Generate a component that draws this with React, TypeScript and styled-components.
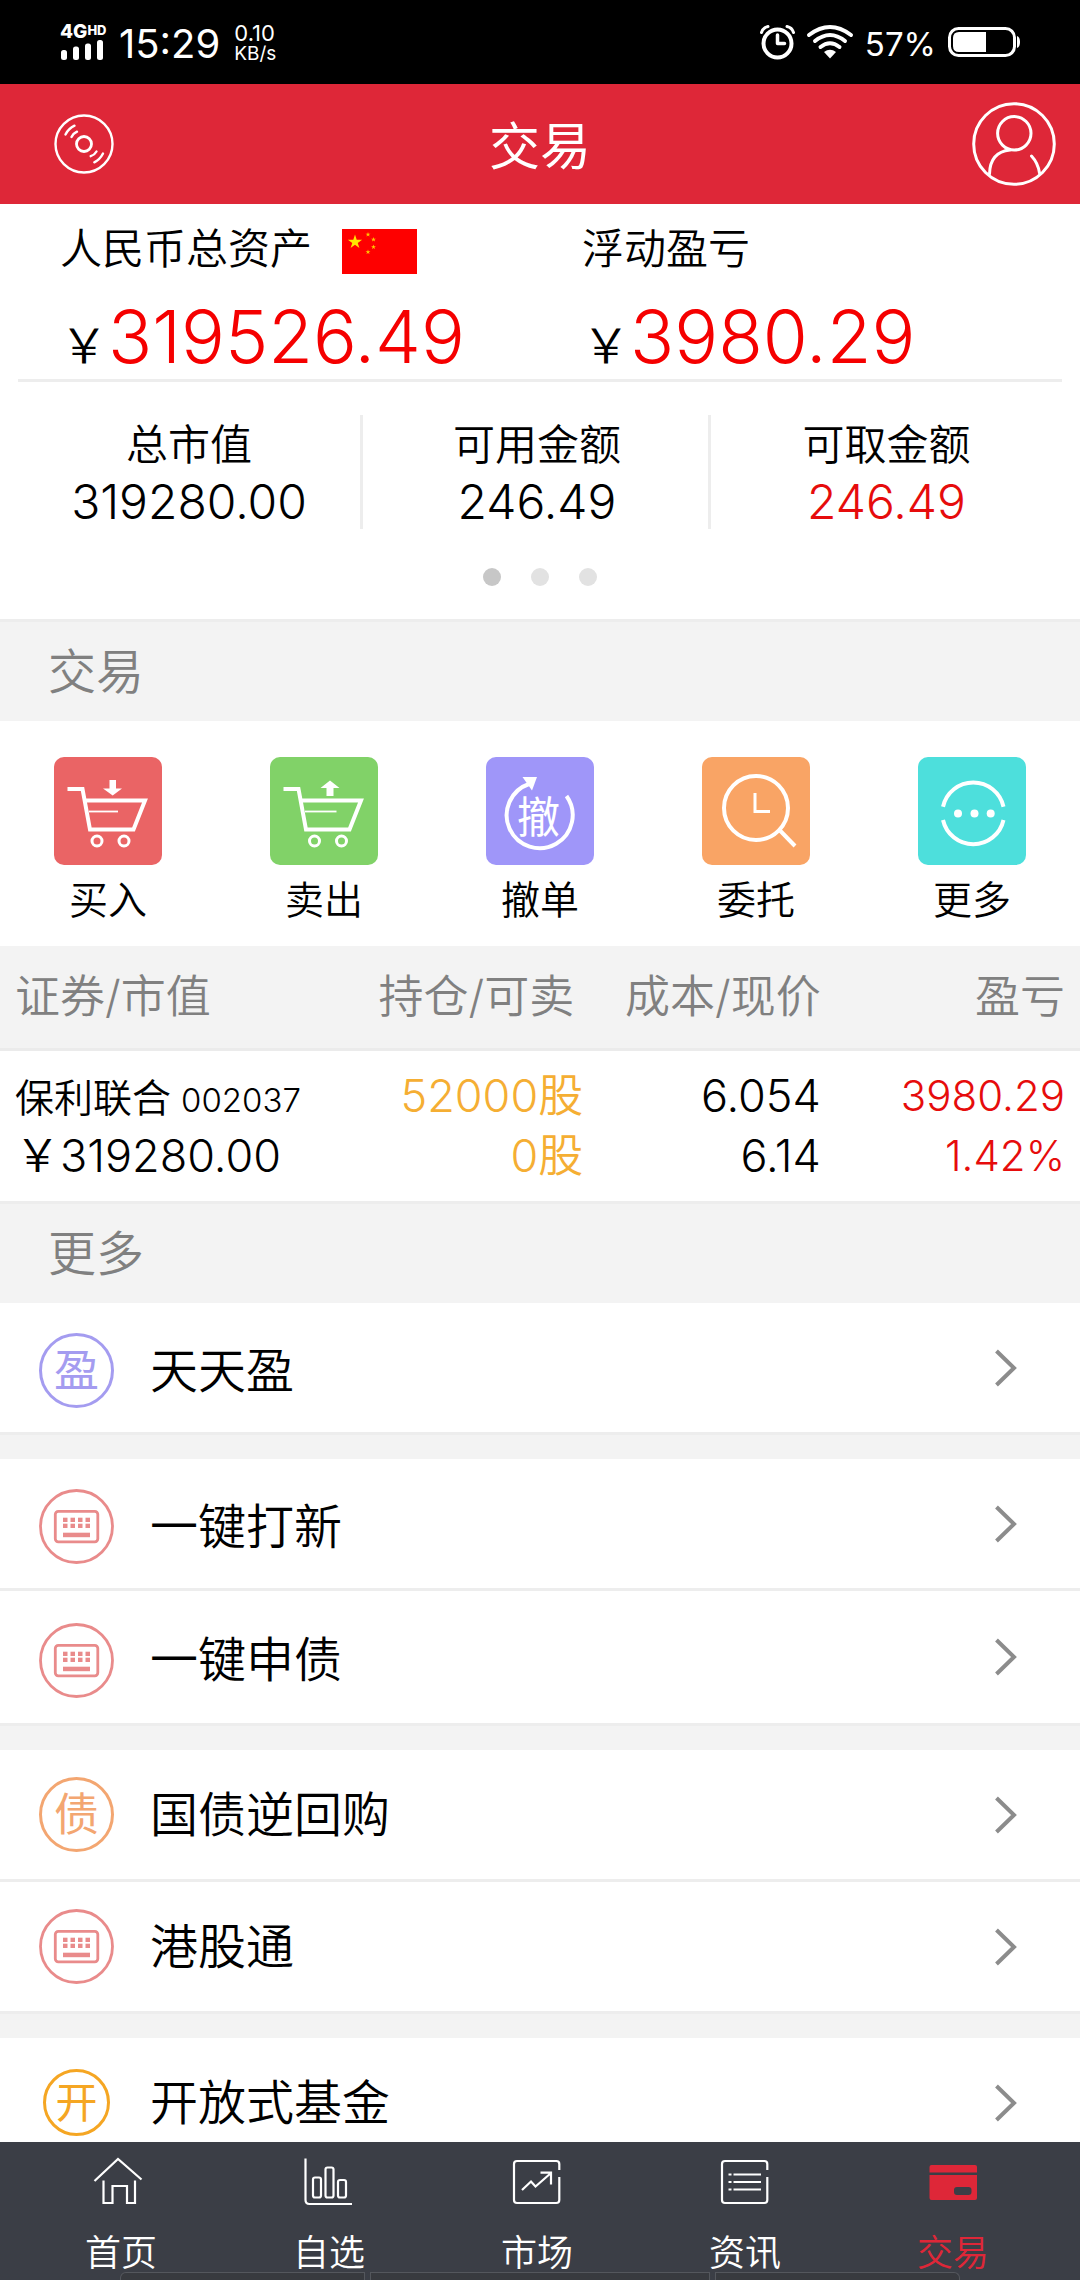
import React from "react";
import styled, { createGlobalStyle } from "styled-components";

const GlobalStyle = createGlobalStyle`
  *, *::before, *::after { box-sizing: border-box; }
  body {
    margin: 0;
    background: #f3f3f3;
    color: #000;
    font-family: Inter, "Noto Sans CJK SC", sans-serif;
    font-weight: 350;
  }
  button {
    margin: 0;
    padding: 0;
    border: 0;
    background: none;
    color: inherit;
    font: inherit;
    cursor: pointer;
  }
  a { color: inherit; text-decoration: none; }
  h1, h2, p, dl, dd, ul { margin: 0; padding: 0; font-weight: inherit; }
  ul { list-style: none; }
  svg { display: block; flex: none; overflow: visible; }
`;

const RED = "#de2738";
const LINE = "#ededed";

const Screen = styled.div`
  display: flex;
  flex-direction: column;
  height: 100vh;
`;

/* ---------- status bar ---------- */

const StatusBar = styled.div`
  display: flex;
  flex: none;
  align-items: center;
  justify-content: space-between;
  height: 84px;
  padding: 0 60px;
  background: #000;
  color: #fff;
  font-weight: 400;
`;

const StatusGroup = styled.div<{ $gap: number }>`
  display: flex;
  align-items: center;
  gap: ${(p) => p.$gap}px;
`;

const Signal = styled.div`
  display: flex;
  flex-direction: column;
  width: 45px;
`;

const Network = styled.div`
  display: flex;
  align-items: flex-start;
  height: 16px;
  font-size: 19px;
  font-weight: 800;
  line-height: 16px;
`;

const NetworkBadge = styled.span`
  font-size: 13px;
  line-height: 12px;
`;

const Clock = styled.span`
  padding-top: 4px;
  font-size: 40px;
  line-height: 42px;
`;

const Speed = styled.div`
  display: flex;
  flex-direction: column;
  font-size: 22px;
  line-height: 22px;
`;

const SpeedUnit = styled.span`
  font-size: 19px;
  line-height: 19px;
`;

const Percent = styled.span`
  padding-top: 3px;
  font-size: 33px;
  line-height: 36px;
`;

/* ---------- header ---------- */

const Header = styled.header`
  display: grid;
  flex: none;
  grid-template-columns: 1fr auto 1fr;
  align-items: center;
  height: 120px;
  padding: 0 24px;
  background: ${RED};
  color: #fff;
`;

const HeaderStart = styled.div`
  display: flex;
  padding-left: 30px;
`;

const HeaderEnd = styled.div`
  display: flex;
  justify-content: flex-end;
`;

const Title = styled.h1`
  padding-top: 6px;
  font-size: 51px;
  font-weight: 400;
  line-height: 60px;
`;

/* ---------- assets ---------- */

const Main = styled.main`
  flex: 1;
  min-height: 0;
  overflow-y: auto;
  scrollbar-width: none;
`;

const Assets = styled.section`
  padding-bottom: 33px;
  background: #fff;
`;

const Totals = styled.dl`
  display: grid;
  grid-template-columns: 1fr 1fr;
  margin: 0 18px;
  padding-top: 15px;
  border-bottom: 3px solid ${LINE};
`;

const Total = styled.div`
  padding-left: 42px;
`;

const TotalLabel = styled.dt`
  display: flex;
  gap: 30px;
  height: 76px;
  font-size: 42px;
  line-height: 60px;
`;

const FlagBox = styled.span`
  padding-top: 10px;
`;

const TotalValue = styled.dd`
  height: 84px;
  color: #f50000;
  font-size: 73px;
  line-height: 84px;
  white-space: nowrap;
`;

const Currency = styled.span`
  color: #000;
  font-size: 48px;
  line-height: 48px;
`;

const Stats = styled.dl`
  display: grid;
  grid-template-columns: repeat(3, 1fr);
  margin-top: 33px;
  padding: 0 21px 0 15px;
`;

const Stat = styled.div<{ $divided: boolean }>`
  padding-left: 3px;
  border-right: ${(p) => (p.$divided ? `3px solid ${LINE}` : "0")};
  text-align: center;
`;

const StatLabel = styled.dt`
  font-size: 42px;
  line-height: 60px;
`;

const StatValue = styled.dd<{ $color: string }>`
  color: ${(p) => p.$color};
  font-size: 48px;
  line-height: 54px;
`;

const Dots = styled.div`
  display: flex;
  justify-content: center;
  gap: 30px;
  margin-top: 39px;
`;

const Dot = styled.button<{ $active: boolean }>`
  width: 18px;
  height: 18px;
  border-radius: 50%;
  background: ${(p) => (p.$active ? "#c7c7c7" : "#e2e2e2")};
`;

/* ---------- sections ---------- */

const SectionTitle = styled.h2`
  padding: 20px 48px 19px;
  border-top: 3px solid ${LINE};
  background: #f3f3f3;
  color: #808080;
  font-size: 48px;
  line-height: 60px;
`;

const Actions = styled.div`
  display: grid;
  grid-template-columns: repeat(5, 1fr);
  padding: 36px 0 16px;
  background: #fff;
`;

const Action = styled.button`
  display: flex;
  flex-direction: column;
  align-items: center;
  gap: 5px;
  font-size: 39px;
  line-height: 60px;
`;

const Tile = styled.span<{ $color: string }>`
  width: 108px;
  height: 108px;
  border-radius: 10px;
  background: ${(p) => p.$color};
`;

/* ---------- holdings ---------- */

const Holdings = styled.table`
  width: 100%;
  border-collapse: separate;
  border-spacing: 0;
  table-layout: fixed;
  background: #fff;
`;

const HeadCell = styled.th<{ $width: string; $end?: number }>`
  width: ${(p) => p.$width};
  height: 105px;
  padding: 0 ${(p) => p.$end ?? 0}px 0 0;
  border-bottom: 3px solid #ebebeb;
  background: #f3f3f3;
  color: #808080;
  font-size: 45px;
  font-weight: inherit;
  line-height: 60px;
  text-align: right;
  white-space: nowrap;

  &:first-child {
    padding-left: 15px;
    text-align: left;
  }
`;

const Cell = styled.td<{ $color?: string; $size?: number; $end?: number }>`
  height: 150px;
  padding: 0 ${(p) => p.$end ?? 0}px 0 0;
  color: ${(p) => p.$color ?? "#000"};
  font-size: ${(p) => p.$size ?? 45}px;
  line-height: 60px;
  text-align: right;
  white-space: nowrap;

  &:first-child {
    padding-left: 15px;
    text-align: left;
  }
`;

const Line = styled.div`
  height: 60px;
`;

const StockName = styled.span`
  font-size: 39px;
`;

const StockCode = styled.span`
  margin-left: 10px;
  font-size: 33px;
`;

/* ---------- menu ---------- */

const Menu = styled.div`
  display: flex;
  flex-direction: column;
  gap: 24px;
`;

const Group = styled.ul`
  background: #fff;
`;

const Row = styled.a<{ $tall?: boolean }>`
  display: flex;
  align-items: center;
  justify-content: space-between;
  height: ${(p) => (p.$tall ? 135 : 132)}px;
  padding: 0 62px 0 39px;
  border-bottom: 3px solid ${LINE};
  font-size: 48px;
  line-height: 60px;
`;

const RowMain = styled.span<{ $low?: boolean }>`
  display: flex;
  align-items: center;
  gap: 36px;
  padding-top: ${(p) => (p.$low ? 6 : 0)}px;
`;

const IconSlot = styled.span`
  display: flex;
  align-items: center;
  justify-content: center;
  width: 75px;
  height: 75px;
`;

const Ring = styled.span<{ $small?: boolean; $color: string }>`
  display: flex;
  align-items: center;
  justify-content: center;
  width: ${(p) => (p.$small ? 67 : 75)}px;
  height: ${(p) => (p.$small ? 67 : 75)}px;
  border: 3px solid ${(p) => p.$color};
  border-radius: 50%;
  color: ${(p) => p.$color};
  font-size: ${(p) => (p.$small ? 42 : 45)}px;
  font-weight: 400;
  line-height: 60px;
`;

/* ---------- tab bar ---------- */

const TabBar = styled.nav`
  position: relative;
  display: grid;
  flex: none;
  grid-template-columns: repeat(5, 1fr);
  height: 138px;
  padding: 15px 23px 0 17px;
  background: #3b3e46;
`;

const Tab = styled.a<{ $active?: boolean }>`
  display: flex;
  flex-direction: column;
  align-items: center;
  gap: 24px;
  color: ${(p) => (p.$active ? RED : "#fff")};
  font-size: 36px;
  line-height: 48px;
`;

const Handle = styled.div`
  position: absolute;
  right: 120px;
  bottom: 0;
  left: 120px;
  display: grid;
  grid-template-columns: 245fr 340fr 245fr;
  gap: 5px;
  height: 8px;
`;

const HandlePart = styled.span`
  border: 1px solid #54575d;
  border-bottom: 0;
  background: #383a3f;

  &:first-child { border-top-left-radius: 6px; }
  &:last-child { border-top-right-radius: 6px; }
`;

/* ---------- drawings ---------- */

const SignalBars = () => (
  <svg width="45" height="20" viewBox="0 0 45 20" fill="#fff" aria-hidden="true">
    <rect x="1" y="10" width="6" height="10" rx="2.5" />
    <rect x="13" y="6.500" width="6" height="13.500" rx="2.500" />
    <rect x="25" y="3.500" width="6" height="16.500" rx="2.500" />
    <rect x="37" y="0" width="6" height="20" rx="2.500" />
  </svg>
);

const AlarmIcon = () => (
  <svg width="35" height="35" viewBox="0 0 35 35" fill="none" stroke="#fff" strokeLinecap="round" aria-hidden="true">
    <circle cx="17.500" cy="18.500" r="14" strokeWidth="4" />
    <path d="M17.500 10v8.500h7" strokeWidth="3.500" strokeLinejoin="round" />
    <path d="M1.500 7.500Q3 2.500 8 1.500M33.500 7.500Q32 2.500 27 1.500" strokeWidth="3" />
  </svg>
);

const WifiIcon = () => (
  <svg width="46" height="34" viewBox="0 0 46 34" fill="none" stroke="#fff" strokeWidth="4" strokeLinecap="round" aria-hidden="true">
    <path d="M2 10Q23-6 44 10M8 16Q23 4 38 16M13.500 22Q23 14.500 32.500 22" />
    <path d="M17 27Q23 22.500 29 27L23 33.500Z" fill="#fff" stroke="none" />
  </svg>
);

const BatteryIcon = () => (
  <svg width="72" height="30" viewBox="0 0 72 30" aria-hidden="true">
    <rect x="1.500" y="1.500" width="65" height="27" rx="9" fill="none" stroke="#fff" strokeWidth="3" />
    <path d="M38 5H11Q5 5 5 11v8q0 6 6 6h27z" fill="#fff" />
    <path d="M69 9q3 1 3 6t-3 6z" fill="#fff" />
  </svg>
);

const DiscIcon = () => (
  <svg width="60" height="60" viewBox="0 0 60 60" fill="none" stroke="#fff" strokeWidth="2.400" strokeLinecap="round" aria-hidden="true">
    <circle cx="30" cy="30" r="28.500" />
    <circle cx="30" cy="30" r="7.500" strokeWidth="2.800" />
    <path d="M11.500 20.500Q14.500 14.500 20.500 11.700M17.500 23Q19 19.500 23 17.700M36.700 42.200Q40.500 41 42.500 37.500M40.300 48.300Q46 45.500 49 39.500" />
  </svg>
);

const UserIcon = () => (
  <svg width="84" height="84" viewBox="0 0 84 84" fill="none" stroke="#fff" strokeWidth="3" strokeLinecap="round" aria-hidden="true">
    <circle cx="42" cy="42" r="40.300" />
    <circle cx="42.300" cy="31.300" r="16.700" />
    <path d="M17.500 72Q18 50 38 48M59.500 54Q66 61 67.500 71" />
  </svg>
);

const STAR = "0,-1 0.225,-0.309 0.951,-0.309 0.363,0.118 0.588,0.809 0,0.382 -0.588,0.809 -0.363,0.118 -0.951,-0.309 -0.225,-0.309";

const Flag = () => (
  <svg width="75" height="45" viewBox="0 0 75 45" role="img" aria-label="人民币">
    <rect width="75" height="45" fill="#fe0000" />
    <polygon points={STAR} transform="translate(13 13) scale(7.500)" fill="#ffe600" />
    {[[26, 5.5], [31.5, 10.5], [31.5, 18], [26, 23]].map(([x, y]) => (
      <polygon key={`${x}-${y}`} points={STAR} transform={`translate(${x} ${y}) scale(2.600)`} fill="#ffc800" />
    ))}
  </svg>
);

const TileSvg = ({ children }: { children: React.ReactNode }) => (
  <svg width="108" height="108" viewBox="0 0 108 108" fill="none" stroke="#fff" strokeWidth="4" aria-hidden="true">
    {children}
  </svg>
);

const Cart = ({ up }: { up?: boolean }) => (
  <TileSvg>
    <path d="M13.500 32h15L36 72.500h43.500L91 43.500H31" />
    <path d={up ? "M35 54.500h31.500" : "M35 54.500h29"} strokeWidth="1.800" />
    <circle cx={up ? 44.5 : 43} cy="84" r="5" strokeWidth="3" />
    <circle cx={up ? 71.5 : 70} cy="84" r="5" strokeWidth="3" />
    <path
      d={up ? "M60 23.500l9.500 7.500h-6v8h-7v-8h-6z" : "M55.500 23h6.500v8.500h6L58.700 38.500 49 31.500h6.500z"}
      fill="#fff"
      stroke="none"
    />
  </TileSvg>
);

const TileChar = styled.text`
  font-size: 43px;
  font-weight: 400;
`;

const Withdraw = () => (
  <TileSvg>
    <path d="M80.500 39A33 33 0 1 1 43 27" />
    <path d="M36.500 20h14.500L46 33.500z" fill="#fff" stroke="none" />
    <TileChar x="52.500" y="76" textAnchor="middle" fill="#fff" stroke="none">撤</TileChar>
  </TileSvg>
);

const Orders = () => (
  <TileSvg>
    <circle cx="54" cy="51" r="32" />
    <path d="M53 36v18.500h15" strokeWidth="3" />
    <path d="M77.500 73L93 89" />
  </TileSvg>
);

const More = () => (
  <TileSvg>
    <path d="M25 49.700A31 31 0 0 1 85.500 49.700M25 63A31 31 0 0 0 85.500 63" />
    <g fill="#fff" stroke="none">
      <circle cx="40" cy="56.500" r="4" />
      <circle cx="56.500" cy="56.500" r="4" />
      <circle cx="72.700" cy="56.500" r="4" />
    </g>
  </TileSvg>
);

const KeyboardIcon = () => (
  <svg width="75" height="75" viewBox="0 0 75 75" fill="none" stroke="#e98b8b" strokeWidth="2.800" aria-hidden="true">
    <circle cx="37.500" cy="37.500" r="36" />
    <rect x="16.300" y="22.300" width="42.500" height="30.500" rx="3" />
    <g fill="#e98b8b" stroke="none">
      {[24, 31.5, 39, 46.5].map((x) => (
        <React.Fragment key={x}>
          <rect x={x} y="28.700" width="4.500" height="4.300" />
          <rect x={x} y="34.700" width="4.500" height="4.300" />
        </React.Fragment>
      ))}
      <rect x="24" y="43.700" width="27" height="4.500" />
    </g>
  </svg>
);

const Chevron = () => (
  <svg width="24" height="40" viewBox="0 0 24 40" fill="none" stroke="#8c8c8c" strokeWidth="4" aria-hidden="true">
    <path d="M2.500 3L20 20 2.500 37" />
  </svg>
);

const TabSvg = ({ children }: { children: React.ReactNode }) => (
  <svg width="48" height="48" viewBox="0 0 48 48" fill="none" stroke="#fff" strokeWidth="2.200" aria-hidden="true">
    {children}
  </svg>
);

const FRAME = "M46.300 13V7q0-3-3-3H4Q1 4 1 7v36q0 3 3 3h39.300q3 0 3-3V20";

const HomeIcon = () => (
  <TabSvg>
    <path d="M-2.500 24L21 2l23.500 20.500" />
    <path d="M6.500 23.500V46h9V29H30v17h8V23.500" />
  </TabSvg>
);

const ChartIcon = () => (
  <TabSvg>
    <path d="M.500 1.500V43q0 4 4 4H47" />
    <rect x="8" y="20.500" width="8" height="20" rx="2" />
    <rect x="20.500" y="10.500" width="8" height="30" rx="2" />
    <rect x="33" y="23" width="8" height="17.500" rx="2" />
  </TabSvg>
);

const MarketIcon = () => (
  <TabSvg>
    <path d={FRAME} />
    <path d="M9 33l9-8.500 4.500 5L38 16M27.500 15.700H38V27.500" />
  </TabSvg>
);

const NewsIcon = () => (
  <TabSvg>
    <path d={FRAME} />
    <path d="M7.500 17.500h3M7.500 25h3M7.500 32.500h3M12.500 17.500H40M12.500 25H40M12.500 32.500H40" />
  </TabSvg>
);

const CardIcon = () => (
  <TabSvg>
    <path d="M.500 15.500V10q0-2 2-2H46q2 0 2 2v5.500z" fill={RED} stroke="none" />
    <path
      d="M.500 18H48v23q0 2-2 2H2.500q-2 0-2-2zM28 30q-3 0-3 3v2q0 3 3 3h11.500q3 0 3-3v-2q0-3-3-3z"
      fill={RED}
      fillRule="evenodd"
      stroke="none"
    />
  </TabSvg>
);

/* ---------- data ---------- */

const stats = [
  { label: "总市值", value: "319280.00", color: "#000" },
  { label: "可用金额", value: "246.49", color: "#000" },
  { label: "可取金额", value: "246.49", color: "#e60c0c" },
];

const actions = [
  { label: "买入", color: "#ea6465", icon: <Cart /> },
  { label: "卖出", color: "#81d268", icon: <Cart up /> },
  { label: "撤单", color: "#9f96f9", icon: <Withdraw /> },
  { label: "委托", color: "#f9a465", icon: <Orders /> },
  { label: "更多", color: "#4ddfdc", icon: <More /> },
];

type Item = { label: string; icon: React.ReactNode; low?: boolean; tall?: boolean };

const menu: Item[][] = [
  [{ label: "天天盈", icon: <Ring $color="#a49cf0">盈</Ring>, low: true }],
  [
    { label: "一键打新", icon: <KeyboardIcon />, low: true },
    { label: "一键申债", icon: <KeyboardIcon />, low: true, tall: true },
  ],
  [
    { label: "国债逆回购", icon: <Ring $color="#f3a671">债</Ring> },
    { label: "港股通", icon: <KeyboardIcon /> },
  ],
  [{ label: "开放式基金", icon: <Ring $small $color="#f5a623">开</Ring> }],
];

const tabs = [
  { label: "首页", icon: <HomeIcon /> },
  { label: "自选", icon: <ChartIcon /> },
  { label: "市场", icon: <MarketIcon /> },
  { label: "资讯", icon: <NewsIcon /> },
  { label: "交易", icon: <CardIcon />, active: true },
];

export default function App() {
  return (
    <Screen>
      <GlobalStyle />
      <StatusBar>
        <StatusGroup $gap={14}>
          <Signal>
            <Network>
              4G<NetworkBadge>HD</NetworkBadge>
            </Network>
            <SignalBars />
          </Signal>
          <Clock>15:29</Clock>
          <Speed>
            0.10<SpeedUnit>KB/s</SpeedUnit>
          </Speed>
        </StatusGroup>
        <StatusGroup $gap={12}>
          <AlarmIcon />
          <WifiIcon />
          <Percent>57%</Percent>
          <BatteryIcon />
        </StatusGroup>
      </StatusBar>

      <Header>
        <HeaderStart>
          <button type="button" aria-label="行情">
            <DiscIcon />
          </button>
        </HeaderStart>
        <Title>交易</Title>
        <HeaderEnd>
          <button type="button" aria-label="我的账户">
            <UserIcon />
          </button>
        </HeaderEnd>
      </Header>

      <Main>
        <Assets>
          <Totals>
            <Total>
              <TotalLabel>
                人民币总资产
                <FlagBox>
                  <Flag />
                </FlagBox>
              </TotalLabel>
              <TotalValue>
                <Currency>{"\uFFE5"}</Currency>319526.49
              </TotalValue>
            </Total>
            <Total>
              <TotalLabel>浮动盈亏</TotalLabel>
              <TotalValue>
                <Currency>{"\uFFE5"}</Currency>3980.29
              </TotalValue>
            </Total>
          </Totals>
          <Stats>
            {stats.map((s, i) => (
              <Stat key={s.label} $divided={i < stats.length - 1}>
                <StatLabel>{s.label}</StatLabel>
                <StatValue $color={s.color}>{s.value}</StatValue>
              </Stat>
            ))}
          </Stats>
          <Dots>
            {[1, 2, 3].map((n) => (
              <Dot key={n} type="button" $active={n === 1} aria-label={`第${n}页`} />
            ))}
          </Dots>
        </Assets>

        <SectionTitle>交易</SectionTitle>
        <Actions>
          {actions.map((a) => (
            <Action key={a.label} type="button">
              <Tile $color={a.color}>{a.icon}</Tile>
              {a.label}
            </Action>
          ))}
        </Actions>

        <Holdings>
          <thead>
            <tr>
              <HeadCell scope="col" $width="32%">证券/市值</HeadCell>
              <HeadCell scope="col" $width="22%" $end={9}>持仓/可卖</HeadCell>
              <HeadCell scope="col" $width="22%">成本/现价</HeadCell>
              <HeadCell scope="col" $width="24%" $end={15}>盈亏</HeadCell>
            </tr>
          </thead>
          <tbody>
            <tr>
              <Cell>
                <Line>
                  <StockName>保利联合</StockName>
                  <StockCode>002037</StockCode>
                </Line>
                <Line>{"\uFFE5"}319280.00</Line>
              </Cell>
              <Cell $color="#f5ae33">
                <Line>52000股</Line>
                <Line>0股</Line>
              </Cell>
              <Cell>
                <Line>6.054</Line>
                <Line>6.14</Line>
              </Cell>
              <Cell $color="#e60c0c" $size={42} $end={15}>
                <Line>3980.29</Line>
                <Line>1.42%</Line>
              </Cell>
            </tr>
          </tbody>
        </Holdings>

        <SectionTitle>更多</SectionTitle>
        <Menu>
          {menu.map((group) => (
            <Group key={group[0].label}>
              {group.map((item) => (
                <li key={item.label}>
                  <Row href="#" $tall={item.tall}>
                    <RowMain $low={item.low}>
                      <IconSlot>{item.icon}</IconSlot>
                      {item.label}
                    </RowMain>
                    <Chevron />
                  </Row>
                </li>
              ))}
            </Group>
          ))}
        </Menu>
      </Main>

      <TabBar>
        {tabs.map((t) => (
          <Tab key={t.label} href="#" $active={t.active} aria-current={t.active ? "page" : undefined}>
            {t.icon}
            {t.label}
          </Tab>
        ))}
        <Handle aria-hidden="true">
          <HandlePart />
          <HandlePart />
          <HandlePart />
        </Handle>
      </TabBar>
    </Screen>
  );
}
